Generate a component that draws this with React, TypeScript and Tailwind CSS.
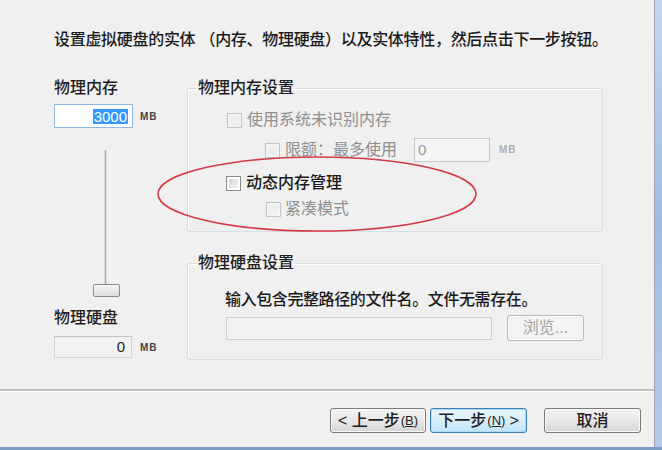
import React from "react";

const FONT = { fontFamily: '"Liberation Sans", "Noto Sans CJK SC", sans-serif' };

function Check({ disabled }: { disabled?: boolean }) {
  return (
    <span
      className={
        "inline-flex w-[15px] h-[15px] shrink-0 p-[2px] border " +
        (disabled ? "border-[#c4c4c4] bg-[#f4f4f4]" : "border-[#8a8a8a] bg-white")
      }
    >
      <span
        className={
          "block w-full h-full " +
          (disabled
            ? "bg-[#eeeeee]"
            : "bg-linear-to-br from-[#d2d2d2] to-[#f6f6f6]")
        }
      />
    </span>
  );
}

function Legend({ children }: { children: React.ReactNode }) {
  return (
    <legend className="ml-[9px] px-[1px] text-[16px] leading-[20px] font-medium text-[#1e1e1e]">
      {children}
    </legend>
  );
}

function Btn({
  children,
  focused,
  disabled,
  className,
}: {
  children: React.ReactNode;
  focused?: boolean;
  disabled?: boolean;
  className?: string;
}) {
  let cls =
    "flex items-center justify-center rounded-[3px] border text-[16px] leading-[20px] ";
  if (focused)
    cls +=
      "border-[#3c7fb1] bg-linear-to-b from-[#ecf7fd] to-[#c2e4f8] text-[#1e1e1e] font-medium shadow-[inset_0_0_0_1px_#a9dcf6]";
  else if (disabled)
    cls += "border-[#b5b9bc] bg-[#f4f4f4] text-[#a3a3a3] shadow-[inset_0_0_0_1px_#fbfbfb]";
  else
    cls +=
      "border-[#7a7a7a] bg-linear-to-b from-[#f4f4f4] via-[#e8e8e8] to-[#d5d5d5] text-[#1e1e1e] font-medium shadow-[inset_0_0_0_1px_#fafafa]";
  return <div className={cls + " " + (className ?? "")}>{children}</div>;
}

export default function App() {
  return (
    <div
      className="relative w-[662px] h-[450px] flex flex-col bg-[#f0f0f0] overflow-hidden"
      style={FONT}
    >
      <div className="flex h-[447px]">
        <div className="w-[655px] flex flex-col border-r border-[#9aa6b4]">
          {/* header */}
          <div className="pl-[54px] pt-[30px] text-[16px] leading-[20px] font-medium text-[#1a1a1a] tracking-[-0.3px]">
            设置虚拟硬盘的实体 （内存、物理硬盘）以及实体特性，然后点击下一步按钮。
          </div>

          {/* body */}
          <div className="flex pl-[54px] mt-[28px]">
            {/* left column */}
            <div className="w-[133px] flex flex-col">
              <div className="text-[16px] leading-[20px] font-medium text-[#1e1e1e]">物理内存</div>
              <div className="flex items-center mt-[6px]">
                <div className="w-[79px] h-[24px] border border-[#8fb7e0] bg-white flex items-center justify-end pr-[4px]">
                  <span className="bg-[#3399ff] text-white text-[15px] leading-[15px] px-[1px]">
                    3000
                  </span>
                </div>
                <span className="ml-[7px] text-[10px] font-bold text-[#444] tracking-[1px]">MB</span>
              </div>
              {/* slider */}
              <div className="mt-[22px] ml-[50px] w-[3px] h-[134px] bg-[#a8a8a8] border-x border-[#dedede]" />
              <div className="ml-[39px] w-[27px] h-[13px] rounded-[2px] border border-[#8c8c8c] bg-linear-to-b from-[#f5f5f5] to-[#dcdcdc]" />
              <div className="mt-[11px] text-[16px] leading-[20px] font-medium text-[#1e1e1e]">物理硬盘</div>
              <div className="flex items-center mt-[8px]">
                <div className="w-[78px] h-[22px] border border-[#d6d6d6] border-t-[#c4c4c4] bg-[#f2f2f2] flex items-center justify-end pr-[6px] text-[15px] text-[#222]">
                  0
                </div>
                <span className="ml-[8px] text-[10px] font-bold text-[#444] tracking-[1px]">MB</span>
              </div>
            </div>

            {/* right column */}
            <div className="w-[416px] flex flex-col">
              <fieldset className="border border-[#d5dfe5] rounded-[3px] pb-[12px] shadow-[inset_1px_1px_0_#fff]">
                <Legend>物理内存设置</Legend>
                <div className="pt-[12px] pl-[39px] flex items-center h-[20px] box-content gap-[5px] text-[16px] leading-[20px] text-[#8f8f8f]">
                  <Check disabled />
                  <span>使用系统未识别内存</span>
                </div>
                <div className="mt-[8px] pl-[77px] flex items-center h-[24px] text-[16px] leading-[20px] text-[#8f8f8f]">
                  <Check disabled />
                  <span className="ml-[5px]">限额：最多使用</span>
                  <div className="ml-[17px] w-[76px] h-[24px] border border-[#c9c9c9] bg-[#f5f5f5] flex items-center pl-[3px] text-[15px] text-[#9a9a9a]">
                    0
                  </div>
                  <span className="ml-[9px] text-[10px] font-bold text-[#b0b0b0] tracking-[1px]">MB</span>
                </div>
                <div className="mt-[11px] pl-[38px] flex items-center h-[20px] gap-[5px] text-[16px] leading-[20px] font-medium text-[#1a1a1a]">
                  <Check />
                  <span>动态内存管理</span>
                </div>
                <div className="mt-[6px] pl-[78px] flex items-center h-[20px] gap-[4px] text-[16px] leading-[20px] text-[#8f8f8f]">
                  <Check disabled />
                  <span>紧凑模式</span>
                </div>
              </fieldset>

              <fieldset className="mt-[21px] border border-[#d5dfe5] rounded-[3px] pb-[18px] shadow-[inset_1px_1px_0_#fff]">
                <Legend>物理硬盘设置</Legend>
                <div className="pt-[17px] pl-[37px] text-[16px] leading-[20px] font-medium text-[#1a1a1a] tracking-[-0.4px]">
                  输入包含完整路径的文件名。文件无需存在。
                </div>
                <div className="mt-[5px] pl-[38px] flex items-center h-[26px]">
                  <div className="w-[266px] h-[23px] border border-[#cfcfcf] bg-[#f2f2f2]" />
                  <Btn disabled className="ml-[15px] w-[77px] h-[26px]">
                    浏览...
                  </Btn>
                </div>
              </fieldset>
            </div>
          </div>

          {/* separator */}
          <div className="mt-[29px] h-[3px] border-t-2 border-[#c2c2c2] border-b border-b-white" />

          {/* buttons */}
          <div className="mt-[16px] flex justify-end pr-[13px]">
            <Btn className="w-[96px] h-[25px]">
              <span>&lt; 上一步</span>
              <span className="text-[13px] ml-[1px]">
                (<span className="underline">B</span>)
              </span>
            </Btn>
            <Btn focused className="ml-[4px] w-[97px] h-[25px]">
              <span>下一步</span>
              <span className="text-[13px] ml-[1px]">
                (<span className="underline">N</span>)
              </span>
              <span className="ml-[4px]">&gt;</span>
            </Btn>
            <Btn className="ml-[17px] w-[97px] h-[25px]">取消</Btn>
          </div>
        </div>
        <div className="flex-1 bg-linear-to-b from-[#c3d8ef] via-[#9dbce0] to-[#b6cde9]" />
      </div>
      <div className="h-[3px] bg-[#7c9dc6]" />

      {/* red annotation ellipse */}
      <svg
        className="absolute left-[155px] top-[153px] pointer-events-none"
        width="324"
        height="84"
        viewBox="0 0 324 84"
      >
        <ellipse
          cx="162"
          cy="41"
          rx="159"
          ry="37"
          fill="none"
          stroke="#d23a45"
          strokeWidth="1.6"
        />
      </svg>
    </div>
  );
}
